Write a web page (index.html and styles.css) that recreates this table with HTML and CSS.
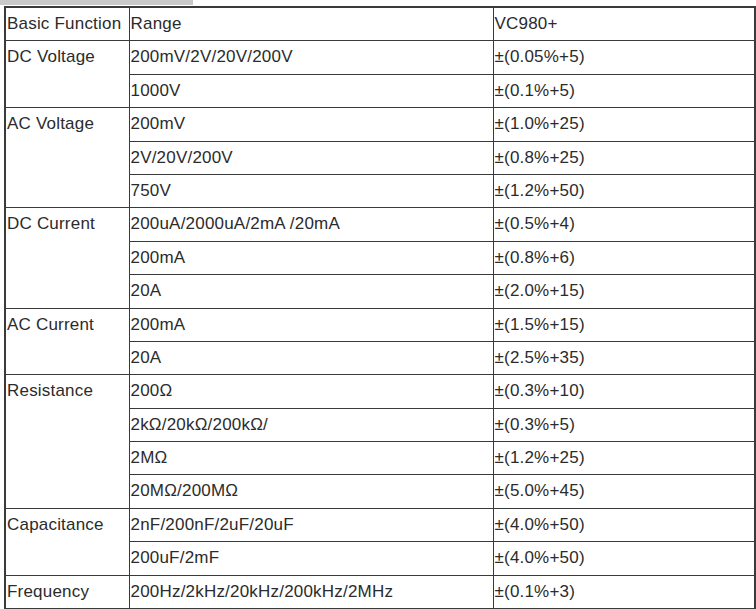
FILE: index.html
```html
<!DOCTYPE html>
<html>
<head>
<meta charset="utf-8">
<link rel="stylesheet" href="styles.css">
</head>
<body>
<div class="topbar"></div>
<table class="spec">
<colgroup><col class="c1"><col class="c2"><col class="c3"></colgroup>
<tr><td>Basic Function</td><td>Range</td><td>VC980+</td></tr>
<tr><td rowspan="2">DC Voltage</td><td>200mV/2V/20V/200V</td><td>±(0.05%+5)</td></tr>
<tr><td>1000V</td><td>±(0.1%+5)</td></tr>
<tr><td rowspan="3">AC Voltage</td><td>200mV</td><td>±(1.0%+25)</td></tr>
<tr><td>2V/20V/200V</td><td>±(0.8%+25)</td></tr>
<tr><td>750V</td><td>±(1.2%+50)</td></tr>
<tr><td rowspan="3">DC Current</td><td>200uA/2000uA/2mA /20mA</td><td>±(0.5%+4)</td></tr>
<tr><td>200mA</td><td>±(0.8%+6)</td></tr>
<tr><td>20A</td><td>±(2.0%+15)</td></tr>
<tr><td rowspan="2">AC Current</td><td>200mA</td><td>±(1.5%+15)</td></tr>
<tr><td>20A</td><td>±(2.5%+35)</td></tr>
<tr><td rowspan="4">Resistance</td><td>200Ω</td><td>±(0.3%+10)</td></tr>
<tr><td>2kΩ/20kΩ/200kΩ/</td><td>±(0.3%+5)</td></tr>
<tr><td>2MΩ</td><td>±(1.2%+25)</td></tr>
<tr><td>20MΩ/200MΩ</td><td>±(5.0%+45)</td></tr>
<tr><td rowspan="2">Capacitance</td><td>2nF/200nF/2uF/20uF</td><td>±(4.0%+50)</td></tr>
<tr><td>200uF/2mF</td><td>±(4.0%+50)</td></tr>
<tr><td>Frequency</td><td>200Hz/2kHz/20kHz/200kHz/2MHz</td><td>±(0.1%+3)</td></tr>
</table>
</body>
</html>
```
FILE: styles.css
```css
html, body {
  margin: 0;
  padding: 0;
  background: #fff;
}
body {
  font-family: "Liberation Sans", Arial, sans-serif;
  color: #2b2b2b;
}
.topbar {
  width: 193px;
  height: 5px;
  background: #c9c9c9;
}
.spec {
  margin: 1px 0 0 4px;
  width: 750px;
  border-collapse: collapse;
  border: 2px solid #3a3a3a;
  table-layout: fixed;
  font-size: 17px;
  letter-spacing: 0.2px;
}
.c1 { width: 124px; }
.c2 { width: 364px; }
.c3 { width: 262px; }
.spec td {
  border: 1px solid #3a3a3a;
  padding: 6px 0 0 1px;
  height: 26.4px;
  vertical-align: top;
  line-height: 20px;
  white-space: nowrap;
}
```
